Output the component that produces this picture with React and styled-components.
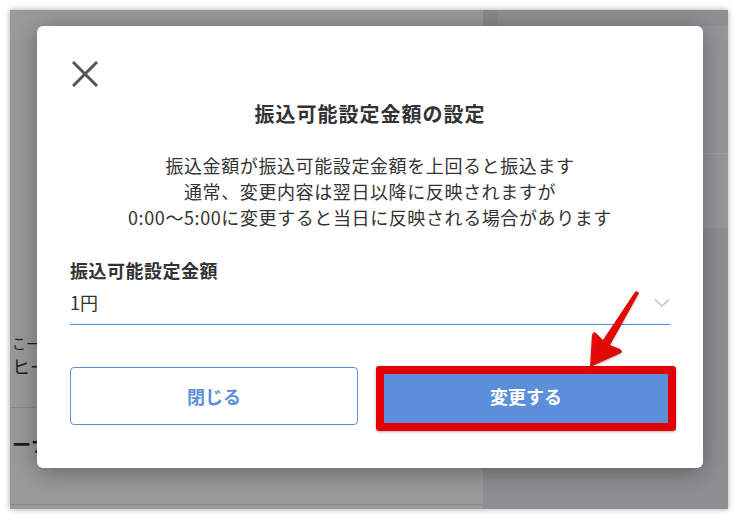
import React from "react";
import styled, { createGlobalStyle } from "styled-components";

const GlobalStyle = createGlobalStyle`
  html, body {
    margin: 0;
    padding: 0;
    background: #ffffff;
  }
  body {
    font-family: "Noto Sans CJK JP", "Noto Sans", sans-serif;
    color: #333;
  }
`;

const Frame = styled.div`
  position: relative;
  margin: 10px;
  width: 718px;
  height: 499px;
  box-shadow: 0 0 6px rgba(0, 0, 0, 0.35);
  display: grid;
  grid-template-columns: 473px 1fr;
  overflow: hidden;
`;

const LeftColumn = styled.div`
  background: #9a9a9a;
  display: flex;
  flex-direction: column;
  padding-top: 300px;
`;

const BgRow = styled.div`
  display: flex;
  flex-direction: column;
  justify-content: flex-start;
  gap: 2px;
  box-sizing: border-box;
  height: ${({ $h }) => $h}px;
  padding-top: ${({ $pt }) => $pt}px;
  padding-left: 2px;
  border-bottom: ${({ $line }) => ($line ? "1px solid #8a8a8a" : "none")};
  overflow: hidden;
`;

const BgText = styled.div`
  font-size: ${({ $size }) => $size}px;
  font-weight: ${({ $bold }) => ($bold ? 700 : 400)};
  color: #1e1e1e;
  line-height: 1.25;
  white-space: nowrap;
`;

const RightColumn = styled.div`
  background: #8f8f93;
  display: flex;
  flex-direction: column;
`;

const TopBand = styled.div`
  height: 16px;
  display: grid;
  grid-template-columns: 15px 1fr;
  & > div:first-child {
    background: #88888c;
  }
`;

const RightPanel = styled.div`
  height: 127px;
  border-bottom: 1px solid #a2a2a6;
  background: #96969a;
`;

const RightPanel2 = styled.div`
  height: 74px;
  background: #979799;
`;

const Overlay = styled.div`
  position: absolute;
  left: 27px;
  top: 16px;
`;

const Modal = styled.div`
  width: 666px;
  box-sizing: border-box;
  background: #fff;
  border-radius: 6px;
  box-shadow: 0 4px 24px rgba(0, 0, 0, 0.35);
  padding: 35px 33px 43px;
  display: flex;
  flex-direction: column;
`;

const CloseButton = styled.button`
  width: 26px;
  height: 26px;
  margin-left: 2px;
  padding: 0;
  border: none;
  background: none;
  display: flex;
  align-items: center;
  justify-content: center;
`;

const Title = styled.h2`
  margin: 14px 0 0;
  text-align: center;
  font-size: 20px;
  letter-spacing: 1px;
  line-height: 26px;
  font-weight: 700;
  color: #333;
`;

const Description = styled.p`
  margin: 25px 0 0;
  text-align: center;
  font-size: 18px;
  letter-spacing: 0.6px;
  line-height: 26px;
  color: #333;
`;

const Label = styled.div`
  margin-top: 28px;
  font-size: 18px;
  letter-spacing: 0.5px;
  line-height: 24px;
  font-weight: 700;
  color: #333;
`;

const SelectRow = styled.div`
  margin-top: 8px;
  height: 34px;
  display: flex;
  align-items: flex-start;
  justify-content: space-between;
  border-bottom: 1px solid #5b8fd9;
`;

const SelectValue = styled.span`
  font-size: 18px;
  line-height: 24px;
  color: #333;
`;

const Buttons = styled.div`
  margin-top: 42px;
  display: grid;
  grid-template-columns: 1fr 1fr;
  gap: 24px;
`;

const ButtonWrap = styled.div`
  position: relative;
`;

const Button = styled.button`
  width: 100%;
  height: 58px;
  box-sizing: border-box;
  border-radius: 4px;
  font-family: "Noto Sans CJK JP", sans-serif;
  font-size: 18px;
  font-weight: 700;
  cursor: pointer;
  border: 1px solid #5b8fd9;
  background: ${({ $primary }) => ($primary ? "#5b8fd9" : "#fff")};
  color: ${({ $primary }) => ($primary ? "#fff" : "#5b8fd9")};
`;

const Highlight = styled.div`
  position: absolute;
  left: -6px;
  right: -6px;
  top: -1px;
  bottom: -6px;
  border: 8px solid #e30000;
  border-radius: 3px;
  box-shadow: 0 1px 3px rgba(0, 0, 0, 0.3);
  pointer-events: none;
`;

const Arrow = styled.svg`
  position: absolute;
  left: 200px;
  top: -80px;
  filter: drop-shadow(0 1px 1px rgba(0, 0, 0, 0.3));
`;

const CloseIcon = () => (
  <svg width="26" height="26" viewBox="0 0 26 26">
    <path d="M2 2 L24 24 M24 2 L2 24" stroke="#555" strokeWidth="3" strokeLinecap="square" />
  </svg>
);

const Chevron = () => (
  <svg width="16" height="10" viewBox="0 0 16 10" style={{ marginTop: 8 }}>
    <path d="M1 1.5 L8 8 L15 1.5" fill="none" stroke="#c2c2c2" strokeWidth="1.5" />
  </svg>
);

const App = () => {
  return (
    <>
      <GlobalStyle />
      <Frame>
        <LeftColumn>
          <BgRow $h={98} $pt={25} $line>
            <BgText $size={14}>こー</BgText>
            <BgText $size={18}>ヒーター</BgText>
          </BgRow>
          <BgRow $h={97} $pt={24} $line>
            <BgText $size={19} $bold>ーナー</BgText>
          </BgRow>
        </LeftColumn>
        <RightColumn>
          <TopBand>
            <div />
            <div />
          </TopBand>
          <RightPanel />
          <RightPanel2 />
        </RightColumn>

        <Overlay>
          <Modal>
            <CloseButton aria-label="閉じる">
              <CloseIcon />
            </CloseButton>
            <Title>振込可能設定金額の設定</Title>
            <Description>
              振込金額が振込可能設定金額を上回ると振込ます
              <br />
              通常、変更内容は翌日以降に反映されますが
              <br />
              0:00〜5:00に変更すると当日に反映される場合があります
            </Description>
            <Label>振込可能設定金額</Label>
            <SelectRow>
              <SelectValue>1円</SelectValue>
              <Chevron />
            </SelectRow>
            <Buttons>
              <ButtonWrap>
                <Button>閉じる</Button>
              </ButtonWrap>
              <ButtonWrap>
                <Button $primary>変更する</Button>
                <Highlight />
                <Arrow width="64" height="84" viewBox="0 0 64 84">
                  <defs>
                    <linearGradient id="arrowFill" x1="0" y1="0" x2="1" y2="1">
                      <stop offset="0" stopColor="#f01010" />
                      <stop offset="1" stopColor="#d40000" />
                    </linearGradient>
                  </defs>
                  <path
                    d="M8 80 L10 48 Q11 44 14 46 L21 53 L53 5 Q55 3 57 6 L28 58 L38 62 Q41 64 39 66 Z"
                    fill="url(#arrowFill)"
                  />
                </Arrow>
              </ButtonWrap>
            </Buttons>
          </Modal>
        </Overlay>
      </Frame>
    </>
  );
};

export default App;
